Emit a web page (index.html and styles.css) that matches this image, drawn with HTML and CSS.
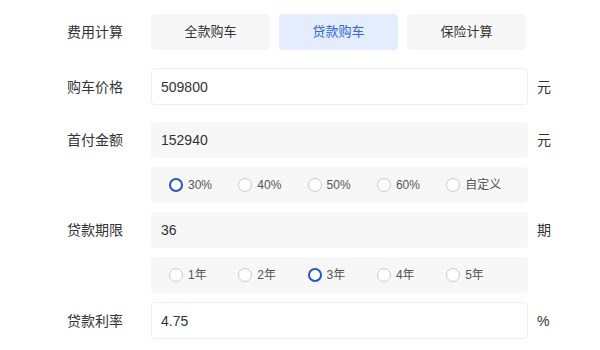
FILE: index.html
```html
<!DOCTYPE html>
<html lang="zh-CN">
<head>
<meta charset="utf-8">
<title>费用计算</title>
<link rel="stylesheet" href="styles.css">
</head>
<body>
<div class="form">
  <div class="row row-tabs">
    <div class="label">费用计算</div>
    <div class="tabs">
      <div class="tab">全款购车</div>
      <div class="tab active">贷款购车</div>
      <div class="tab">保险计算</div>
    </div>
  </div>

  <div class="row row-price">
    <div class="label">购车价格</div>
    <div class="field white">509800</div>
    <div class="unit">元</div>
  </div>

  <div class="row row-down">
    <div class="label">首付金额</div>
    <div class="field grey">152940</div>
    <div class="unit">元</div>
  </div>

  <div class="row row-sub">
    <div class="radios">
      <div class="radio checked"><span class="dot"></span><span class="rtext">30%</span></div>
      <div class="radio"><span class="dot"></span><span class="rtext">40%</span></div>
      <div class="radio"><span class="dot"></span><span class="rtext">50%</span></div>
      <div class="radio"><span class="dot"></span><span class="rtext">60%</span></div>
      <div class="radio"><span class="dot"></span><span class="rtext">自定义</span></div>
    </div>
  </div>

  <div class="row row-sub">
    <div class="label">贷款期限</div>
    <div class="field grey">36</div>
    <div class="unit">期</div>
  </div>

  <div class="row row-sub">
    <div class="radios">
      <div class="radio"><span class="dot"></span><span class="rtext">1年</span></div>
      <div class="radio"><span class="dot"></span><span class="rtext">2年</span></div>
      <div class="radio checked"><span class="dot"></span><span class="rtext">3年</span></div>
      <div class="radio"><span class="dot"></span><span class="rtext">4年</span></div>
      <div class="radio"><span class="dot"></span><span class="rtext">5年</span></div>
    </div>
  </div>

  <div class="row row-sub">
    <div class="label">贷款利率</div>
    <div class="field white">4.75</div>
    <div class="unit">%</div>
  </div>
</div>
</body>
</html>
```

FILE: styles.css
```css
html, body {
  margin: 0;
  padding: 0;
  background: #ffffff;
}

body {
  font-family: "Liberation Sans", "Noto Sans CJK SC", sans-serif;
  color: #333333;
  font-size: 14px;
}

.form {
  padding: 14px 0 0 67px;
  display: flex;
  flex-direction: column;
}

.row {
  display: flex;
  align-items: center;
}

.row-price {
  margin-top: 18px;
}

.row-down {
  margin-top: 17px;
}

.row-sub {
  margin-top: 9px;
}

.label {
  width: 84px;
  flex: none;
  font-size: 14px;
  color: #333333;
  line-height: 20px;
}

.tabs {
  display: flex;
  gap: 9px;
}

.tab {
  width: 119px;
  height: 36px;
  line-height: 36px;
  text-align: center;
  background: #f7f7f7;
  border-radius: 4px;
  font-size: 13px;
  color: #333333;
}

.tab.active {
  background: #e4edfd;
  color: #3366e0;
}

.field {
  width: 377px;
  box-sizing: border-box;
  padding-left: 10px;
  border-radius: 4px;
  font-size: 14px;
  color: #333333;
  display: flex;
  align-items: center;
}

.field.white {
  height: 37px;
  background: #ffffff;
  border: 1px solid #f0f0f0;
  padding-left: 9px;
}

.field.grey {
  height: 36px;
  background: #f7f7f7;
}

.unit {
  margin-left: 9px;
  font-size: 14px;
  line-height: 20px;
  height: 20px;
  color: #333333;
}

.radios {
  margin-left: 84px;
  width: 377px;
  height: 36px;
  box-sizing: border-box;
  padding-left: 18px;
  background: #f7f7f7;
  border-radius: 4px;
  display: grid;
  grid-template-columns: repeat(5, 69.3px);
  align-items: center;
}

.radio {
  display: flex;
  align-items: center;
  gap: 5px;
}

.dot {
  width: 14px;
  height: 14px;
  box-sizing: border-box;
  border: 1px solid #cccccc;
  border-radius: 50%;
  background: #ffffff;
  flex: none;
}

.radio.checked .dot {
  border: 2.5px solid #1a56d8;
}

.rtext {
  font-size: 12px;
  color: #555555;
  line-height: 16px;
}
```
